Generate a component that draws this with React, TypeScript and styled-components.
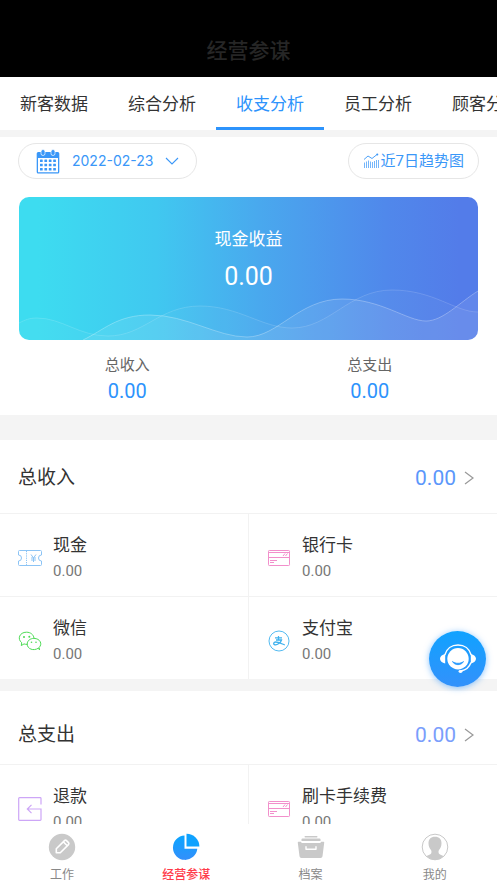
import React, { useState } from "react";
import styled, { createGlobalStyle } from "styled-components";

const GlobalStyle = createGlobalStyle`
  *, *::before, *::after { box-sizing: border-box; }
  body {
    margin: 0;
    background: #fff;
    color: #333;
    font-family: Roboto, "Noto Sans CJK SC", sans-serif;
  }
  button { font: inherit; color: inherit; background: none; border: 0; padding: 0; margin: 0; cursor: pointer; }
  h1, h2, p, dl, dd, dt { margin: 0; font-weight: 400; }
  svg { display: block; flex: none; }
`;

const Page = styled.div`
  display: flex;
  flex-direction: column;
  height: 100vh;
  overflow: hidden;
`;

const TitleBar = styled.header`
  flex: none;
  display: flex;
  justify-content: center;
  padding: 36px 0 11px;
  background: #000;
`;

const PageTitle = styled.h1`
  && { font-weight: 500; }
  font-size: 21px;
  line-height: 30px;
  color: #262626;
`;

const Tabs = styled.nav`
  flex: none;
  display: flex;
  overflow: hidden;
`;

const Tab = styled.button<{ $active: boolean }>`
  && {
    flex: none;
    padding: 4px 20px 0;
    border-bottom: 3px solid ${(p) => (p.$active ? "#2d93fc" : "transparent")};
    font-size: 17px;
    line-height: 46px;
    color: ${(p) => (p.$active ? "#2d93fc" : "#333")};
    white-space: nowrap;
  }
`;

const Content = styled.main`
  flex: 1;
  min-height: 0;
  overflow-y: auto;
  scrollbar-width: none;
`;

const Gap = styled.div<{ $size: number }>`
  height: ${(p) => p.$size}px;
  background: #f4f4f4;
`;

const Filters = styled.div`
  display: flex;
  justify-content: space-between;
  padding: 6px 18px 18px;
`;

const Pill = styled.button<{ $wide?: boolean }>`
  && {
    display: flex;
    align-items: center;
    gap: ${(p) => (p.$wide ? 12 : 2)}px;
    height: 36px;
    padding: 0 ${(p) => (p.$wide ? 17 : 14)}px;
    border: 1px solid #e6e6e6;
    border-radius: 18px;
    font-size: 15px;
    line-height: 20px;
    color: #3a97f8;
  }
`;

const DateText = styled.span`
  font-family: Inter, sans-serif;
  font-size: 14px;
`;

const ProfitCard = styled.section`
  position: relative;
  display: flex;
  flex-direction: column;
  align-items: center;
  height: 143px;
  margin: 0 19px;
  padding-top: 29px;
  border-radius: 10px;
  overflow: hidden;
  color: #fff;
  background: linear-gradient(90deg, #3ddcf0 4%, #40c8f0 30%, #49a9ee 52%, #5088eb 80%, #537ce9 96%);
`;

const ProfitLabel = styled.h2`
  font-size: 17px;
  line-height: 26px;
`;

const ProfitValue = styled.p`
  margin-top: 9px;
  font-size: 25px;
  line-height: 32px;
`;

const Waves = styled.svg`
  position: absolute;
  left: 0;
  bottom: 0;
  width: 100%;
  height: 100%;
`;

const Totals = styled.dl`
  display: grid;
  grid-template-columns: 1fr 1fr;
  padding: 13px 6px 9px;
  text-align: center;
`;

const TotalLabel = styled.dt`
  font-size: 15px;
  line-height: 24px;
  color: #666;
`;

const TotalValue = styled.dd`
  font-size: 20px;
  line-height: 29px;
  color: #2d93fc;
`;

const SectionHead = styled.button<{ $low?: boolean }>`
  && {
    display: flex;
    align-items: center;
    width: 100%;
    height: 73px;
    padding: ${(p) => (p.$low ? 14 : 2)}px 23px 0 18px;
    text-align: left;
  }
`;

const SectionTitle = styled.span`
  flex: 1;
  font-size: 19px;
  line-height: 28px;
`;

const SectionValue = styled.span<{ $color: string }>`
  margin-right: 8px;
  font-size: 21px;
  line-height: 28px;
  color: ${(p) => p.$color};
`;

const Items = styled.div`
  display: grid;
  grid-template-columns: 1fr 1fr;
  gap: 1px;
  padding-top: 1px;
  background: #f2f2f2;
`;

const Item = styled.div`
  display: flex;
  align-items: center;
  gap: 11px;
  height: 82px;
  padding: 5px 18px 0;
  background: #fff;
`;

const ItemName = styled.p`
  font-size: 17px;
  line-height: 26px;
`;

const ItemValue = styled.p`
  font-size: 15px;
  line-height: 26px;
  color: #777;
`;

const SupportButton = styled.button`
  && {
    position: fixed;
    right: 11px;
    bottom: 196px;
    display: flex;
    align-items: center;
    justify-content: center;
    width: 57px;
    height: 56px;
    border-radius: 50%;
    background: linear-gradient(#10a2ff, #3391fb);
    box-shadow: 0 1px 6px rgba(45, 147, 252, 0.55);
  }
`;

const BottomNav = styled.nav`
  flex: none;
  display: grid;
  grid-template-columns: repeat(4, 1fr);
  height: 59px;
  background: #fff;
`;

const NavItem = styled.button<{ $active: boolean }>`
  && {
    display: flex;
    flex-direction: column;
    align-items: center;
    gap: 4px;
    padding-top: 9px;
    font-size: 12px;
    line-height: 20px;
    color: ${(p) => (p.$active ? "#ff3b4a" : "#888")};
    font-weight: ${(p) => (p.$active ? 500 : 400)};
  }
`;

const CalendarIcon = () => (
  <svg width="24" height="25" viewBox="0 0 24 25">
    <path
      fill="#3a97f8"
      fillRule="evenodd"
      d="M2.200 3h19.600a1.500 1.500 0 0 1 1.500 1.500v18.500a1.500 1.500 0 0 1-1.500 1.500H2.200A1.500 1.500 0 0 1 .7 23V4.500A1.500 1.500 0 0 1 2.200 3zM2 9V23.200h20V9z"
    />
    {[7, 17].map((x) => (
      <rect key={x} x={x - 2} y="0.500" width="4" height="6" rx="2" fill="#3a97f8" stroke="#fff" strokeWidth="0.700" />
    ))}
    {[10.600, 14.800, 19].map((y) =>
      [4, 8.400, 12.800, 17.200].map((x) => (
        <rect key={`${x}-${y}`} x={x} y={y} width="2.700" height="2.500" rx="0.300" fill="#3a97f8" />
      ))
    )}
  </svg>
);

const TrendIcon = () => (
  <svg width="16" height="16" viewBox="0 0 16 16" fill="none" stroke="#3a97f8">
    <path d="M1 6.500L5 3l4 2.500L14 1.500" strokeWidth="0.900" />
    <circle cx="14.300" cy="1.500" r="1" fill="#3a97f8" stroke="none" />
    <path
      d="M1.500 15V9.500M3.500 15V8.500M5.500 15V7.500M7.500 15V8.500M9.500 15V9M11.500 15V8M13.500 15V7M15.500 15V7"
      strokeWidth="1"
      opacity="0.7"
    />
  </svg>
);

const DownIcon = () => (
  <svg width="14" height="8" viewBox="0 0 14 8" fill="none" stroke="#3a97f8" strokeWidth="1.100">
    <path d="M1 1l6 6 6-6" />
  </svg>
);

const RightIcon = () => (
  <svg width="10" height="14" viewBox="0 0 10 14" fill="none" stroke="#999" strokeWidth="1.200">
    <path d="M1 1l8 6-8 6" />
  </svg>
);

const CashIcon = () => (
  <svg width="24" height="24" viewBox="0 0 24 24" fill="none" stroke="#8cc4f5" strokeWidth="1">
    <path d="M1.500 4.500h21a1 1 0 0 1 1 1V9a3 3 0 0 0 0 6v3.500a1 1 0 0 1-1 1h-21a1 1 0 0 1-1-1V15a3 3 0 0 0 0-6V5.500a1 1 0 0 1 1-1z" />
    <path d="M8.500 5v14" strokeDasharray="1.200 1" />
    <path d="M13 8.500l2.500 3.500L18 8.500M15.500 12v4M13 12h5M13 14h5" />
  </svg>
);

const CardIcon = () => (
  <svg width="24" height="24" viewBox="0 0 24 24" fill="none" stroke="#f28fcb" strokeWidth="1">
    <rect x="1.500" y="4.500" width="21" height="15" rx="0.800" />
    <path d="M2 6.500h20M2 11.500h20M3 14.500h7M3 16.500h4M16 10l2-2.500M18.500 10l2-2.500" />
  </svg>
);

const WechatIcon = () => (
  <svg width="24" height="24" viewBox="0 0 24 24" fill="none" stroke="#4ddb55" strokeWidth="1">
    <path d="M9.500 15.300c-1.200.2-2.500 0-3.500-.4L3.300 16.600l.4-2.900C-1 10 1.500 3.200 8.500 3.200c4 0 7 2.300 7.500 6" />
    <path d="M20.500 19.100c-5 3.300-11.300.8-11.300-4 0-3.400 3-5.700 6.700-5.700 6.500 0 8.700 6 5.200 9l.4 2.500z" />
    <g fill="#4ddb55" stroke="none">
      <circle cx="6" cy="8" r="1" />
      <circle cx="11.300" cy="7.800" r="1" />
      <circle cx="13.500" cy="13.200" r="0.800" />
      <circle cx="18" cy="13.200" r="0.800" />
    </g>
  </svg>
);

const AlipayIcon = () => (
  <svg width="24" height="24" viewBox="0 0 24 24" fill="none" stroke="#3fb2ee">
    <circle cx="12" cy="12" r="10" strokeWidth="0.900" />
    <path d="M8 8.800h7M11.500 7v4" strokeWidth="1.200" />
    <path d="M9 11h5.500c-.6 2-3 4.800-5.700 4.800-2.800 0-2.800-2.800 0-2.800 2.500 0 5.500 1.600 9 3" strokeWidth="1.300" />
  </svg>
);

const RefundIcon = () => (
  <svg width="24" height="24" viewBox="0 0 24 24" fill="none" stroke="#cda6f7" strokeWidth="1.200">
    <path d="M23 7.500V1.500a.8.8 0 0 0-.8-.8H1.500a.8.8 0 0 0-.8.8v21a.8.8 0 0 0 .8.8h20.700a.8.8 0 0 0 .8-.8V12H9.500M13.500 7.800L9.300 12l4.200 4.200" />
  </svg>
);

const SupportIcon = () => (
  <svg width="36" height="30" viewBox="0 0 36 30" fill="none">
    <circle cx="18" cy="14.800" r="10.700" fill="#fff" />
    <path d="M12.500 17.500c2.800 2.400 8.200 2.400 11 0-2 4.200-9 4.200-11 0z" fill="#2498fe" stroke="#2498fe" strokeWidth="0.800" strokeLinejoin="round" />
    <path d="M4.800 11C6.500 4.800 11.700 1 18 1s11.500 3.800 13.200 10" stroke="#fff" strokeWidth="1.400" />
    <path d="M5.200 10v9.600C2 19 0 17 0 14.800S2 10.600 5.200 10zM30.800 10v9.600c3.200-.6 5.200-2.600 5.200-4.800s-2-4.200-5.200-4.800z" fill="#fff" />
    <path d="M31 18.500c-1.500 4.200-4.800 7.500-10 8.500" stroke="#fff" strokeWidth="1.400" />
    <ellipse cx="20.500" cy="27.500" rx="2" ry="1.400" fill="#fff" />
  </svg>
);

const WorkIcon = () => (
  <svg width="28" height="28" viewBox="0 0 28 28">
    <circle cx="14" cy="14" r="13.200" fill="#c9c9c9" />
    <path
      d="M8.300 15.800l8.200-8.200a1.500 1.500 0 0 1 2 0l2 2a1.500 1.500 0 0 1 0 2l-8.200 8.200H8.300zM15.500 9l3.500 3.500"
      fill="none"
      stroke="#fff"
      strokeWidth="1.600"
      strokeLinejoin="round"
    />
  </svg>
);

const PieIcon = () => (
  <svg width="28" height="28" viewBox="0 0 28 28">
    <defs>
      <linearGradient id="pie" x1="0" y1="0" x2="0" y2="1">
        <stop offset="0" stopColor="#0ba5ff" />
        <stop offset="1" stopColor="#338ffb" />
      </linearGradient>
    </defs>
    <path d="M12.500 2.500A12.200 12.200 0 1 0 25.300 15.800H12.500z" fill="url(#pie)" />
    <path d="M14.500.8A12.800 12.800 0 0 1 27.400 13.500H14.500z" fill="#0fa2ff" />
  </svg>
);

const ArchiveIcon = () => (
  <svg width="28" height="28" viewBox="0 0 28 28" fill="#c9c9c9">
    <rect x="7.500" y="3" width="13" height="1.400" rx="0.700" />
    <path d="M5.500 5.600h17a1 1 0 0 1 1 1v1.400h-19V6.600a1 1 0 0 1 1-1z" />
    <path d="M1.600 8.800h2.200l1 1.200h18.400l1-1.200h2.200a.8.8 0 0 1 .8 1l-1.700 13.400a2 2 0 0 1-2 1.800H4.500a2 2 0 0 1-2-1.800L.8 9.800a.8.8 0 0 1 .8-1z" />
    <path d="M9 13.800v2.500h10v-2.500" fill="none" stroke="#fff" strokeWidth="1.400" strokeLinejoin="round" strokeLinecap="round" />
  </svg>
);

const ProfileIcon = () => (
  <svg width="28" height="28" viewBox="0 0 28 28">
    <circle cx="14" cy="14" r="12.800" fill="none" stroke="#c9c9c9" strokeWidth="1" />
    <path
      d="M14 3.800c4.300 0 6.500 2.500 6.500 6.500 0 3.200-1.200 5-2.500 6.700-.8 1.100-.6 3.100.3 4 .8.700 2.700 1.300 4.200 2.200A12.500 12.500 0 0 1 14 27a12.500 12.500 0 0 1-8.500-3.800c1.500-.9 3.400-1.500 4.200-2.200.9-.9 1.100-2.900.3-4-1.300-1.700-2.500-3.500-2.500-6.700 0-4 2.200-6.500 6.500-6.500z"
      fill="#c9c9c9"
    />
  </svg>
);

const CardWaves = () => (
  <Waves viewBox="0 0 459 143" preserveAspectRatio="none" fill="none" aria-hidden="true">
    <path d="M0 126C6 123 10 121 18 121C43 121 60 139 89 139C125 139 140 109 181 109C220 109 243 131 273 131C311 131 330 93 373 93C415 93 436 115 459 115V143H0z" fill="#fff" fillOpacity="0.04" />
    <path d="M64 143C85 133 98 118 131 118C168 118 198 140 228 140C259 140 280 102 323 102C362 102 388 124 407 124C424 124 441 105 459 94V143z" fill="#fff" fillOpacity="0.09" />
    <path d="M0 126C6 123 10 121 18 121C43 121 60 139 89 139C125 139 140 109 181 109C220 109 243 131 273 131C311 131 330 93 373 93C415 93 436 115 459 115" stroke="#fff" strokeOpacity="0.15" />
    <path d="M64 143C85 133 98 118 131 118C168 118 198 140 228 140C259 140 280 102 323 102C362 102 388 124 407 124C424 124 441 105 459 94" stroke="#fff" strokeOpacity="0.28" />
  </Waves>
);

type Entry = { name: string; value: string; icon: React.ReactNode };

const income: Entry[] = [
  { name: "现金", value: "0.00", icon: <CashIcon /> },
  { name: "银行卡", value: "0.00", icon: <CardIcon /> },
  { name: "微信", value: "0.00", icon: <WechatIcon /> },
  { name: "支付宝", value: "0.00", icon: <AlipayIcon /> },
];

const expense: Entry[] = [
  { name: "退款", value: "0.00", icon: <RefundIcon /> },
  { name: "刷卡手续费", value: "0.00", icon: <CardIcon /> },
];

const tabs = ["新客数据", "综合分析", "收支分析", "员工分析", "顾客分析"];

const navItems = [
  { label: "工作", icon: <WorkIcon /> },
  { label: "经营参谋", icon: <PieIcon /> },
  { label: "档案", icon: <ArchiveIcon /> },
  { label: "我的", icon: <ProfileIcon /> },
];

type LedgerProps = { title: string; total: string; color: string; entries: Entry[]; low?: boolean };

function Ledger({ title, total, color, entries, low }: LedgerProps) {
  return (
    <section>
      <SectionHead type="button" $low={low}>
        <SectionTitle>{title}</SectionTitle>
        <SectionValue $color={color}>{total}</SectionValue>
        <RightIcon />
      </SectionHead>
      <Items>
        {entries.map((entry) => (
          <Item key={entry.name}>
            {entry.icon}
            <div>
              <ItemName>{entry.name}</ItemName>
              <ItemValue>{entry.value}</ItemValue>
            </div>
          </Item>
        ))}
      </Items>
    </section>
  );
}

export default function App() {
  const [tab, setTab] = useState("收支分析");
  const [section, setSection] = useState("经营参谋");

  return (
    <Page lang="zh-CN">
      <GlobalStyle />
      <TitleBar>
        <PageTitle>经营参谋</PageTitle>
      </TitleBar>
      <Tabs>
        {tabs.map((name) => (
          <Tab key={name} type="button" $active={name === tab} onClick={() => setTab(name)}>
            {name}
          </Tab>
        ))}
      </Tabs>
      <Content>
        <Gap $size={7} />
        <Filters>
          <Pill type="button" $wide>
            <CalendarIcon />
            <DateText>2022-02-23</DateText>
            <DownIcon />
          </Pill>
          <Pill type="button">
            <TrendIcon />
            <span>近7日趋势图</span>
          </Pill>
        </Filters>
        <ProfitCard>
          <CardWaves />
          <ProfitLabel>现金收益</ProfitLabel>
          <ProfitValue>0.00</ProfitValue>
        </ProfitCard>
        <Totals>
          <div>
            <TotalLabel>总收入</TotalLabel>
            <TotalValue>0.00</TotalValue>
          </div>
          <div>
            <TotalLabel>总支出</TotalLabel>
            <TotalValue>0.00</TotalValue>
          </div>
        </Totals>
        <Gap $size={25} />
        <Ledger title="总收入" total="0.00" color="#5b97fb" entries={income} />
        <Gap $size={12} />
        <Ledger title="总支出" total="0.00" color="#7a9efc" entries={expense} low />
      </Content>
      <SupportButton type="button" aria-label="客服">
        <SupportIcon />
      </SupportButton>
      <BottomNav>
        {navItems.map((item) => (
          <NavItem key={item.label} type="button" $active={item.label === section} onClick={() => setSection(item.label)}>
            {item.icon}
            <span>{item.label}</span>
          </NavItem>
        ))}
      </BottomNav>
    </Page>
  );
}
